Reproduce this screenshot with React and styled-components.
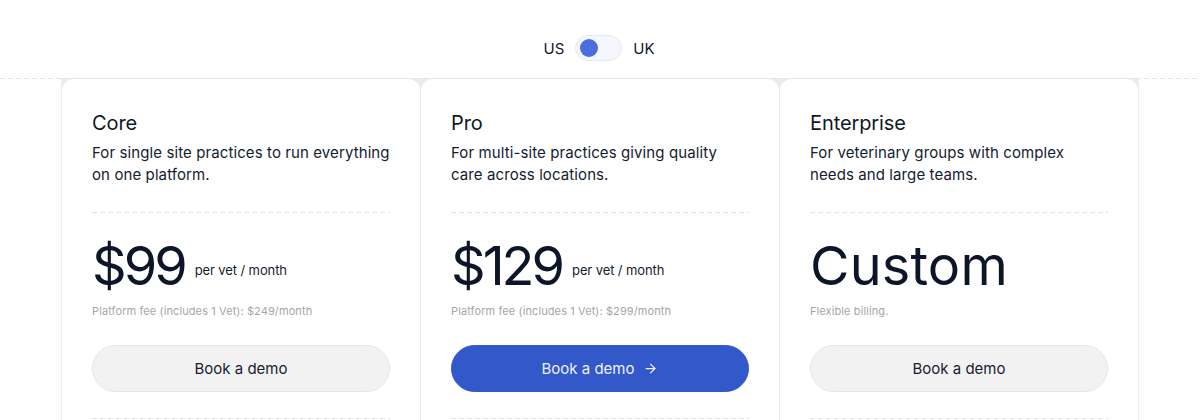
import React from "react";
import styled, { createGlobalStyle } from "styled-components";
import { ArrowRight } from "lucide-react";

const Global = createGlobalStyle`
  html, body { margin: 0; padding: 0; background: #fff; }
  body { font-family: Inter, "Noto Sans", sans-serif; color: #0f1629; -webkit-font-smoothing: antialiased; }
  * { box-sizing: border-box; }
`;

const Page = styled.div`
  width: 1200px;
  padding-top: 35px;
  overflow: hidden;
`;

const ToggleRow = styled.div`
  display: flex;
  justify-content: center;
  align-items: center;
  gap: 11px;
  height: 26px;
  margin-bottom: 17px;
  font-size: 15px;
  color: #111a2e;
  padding-right: 2px;
`;

const Track = styled.div`
  width: 47px;
  height: 26px;
  border-radius: 13px;
  background: #f6f7fc;
  border: 1px solid #e7e9f2;
  display: flex;
  align-items: center;
  padding: 0 4px;
`;

const Knob = styled.div`
  width: 18px;
  height: 18px;
  border-radius: 50%;
  background: #4a6edb;
`;

const Band = styled.div`
  display: flex;
  justify-content: center;
  background-image: linear-gradient(to right, #e4e4e4 60%, transparent 0);
  background-size: 8px 1px;
  background-repeat: repeat-x;
  background-position: 0 0;
`;

const Grid = styled.div`
  width: 1078px;
  display: grid;
  grid-template-columns: repeat(3, 358px);
  gap: 1px;
  padding: 0 1px;
  background: #ececec;
  border-top: 1px solid #e6e6e6;
  height: 343px;
`;

const Card = styled.div`
  background: #fff;
  border-radius: 12px 12px 0 0;
  padding: 30px 30px 0;
  display: flex;
  flex-direction: column;
`;

const Title = styled.div`
  font-size: 20px;
  line-height: 28px;
  letter-spacing: -0.1px;
  color: #101828;
`;

const Desc = styled.div`
  margin-top: 5px;
  font-size: 15px;
  line-height: 22px;
  color: #141c30;
  letter-spacing: 0.1px;
`;

const Divider = styled.div`
  height: 1px;
  margin: ${p => p.$top}px 0 26px;
  background-image: linear-gradient(to right, #e2e2e2 60%, transparent 0);
  background-size: 8px 1px;
  background-repeat: repeat-x;
`;

const PriceRow = styled.div`
  display: flex;
  align-items: center;
  gap: 10px;
  height: 53px;
`;

const Price = styled.div`
  font-size: 54px;
  line-height: 53px;
  letter-spacing: ${p => (p.$numeric ? "-3px" : "0.2px")};
  color: #0d1529;
`;

const Per = styled.div`
  font-size: 13px;
  padding-top: 8px;
  color: #141c30;
  letter-spacing: -0.1px;
`;

const Fee = styled.div`
  margin-top: 11px;
  font-size: 11px;
  line-height: 16px;
  color: #a6a6a6;
  letter-spacing: 0.1px;
`;

const Button = styled.button`
  margin-top: 26px;
  height: 47px;
  width: 100%;
  border-radius: 24px;
  font-family: inherit;
  font-size: 15px;
  letter-spacing: 0;
  display: flex;
  align-items: center;
  justify-content: center;
  gap: 9px;
  cursor: pointer;
  padding-bottom: 2px;
  border: 1px solid ${p => (p.$primary ? "#3358c9" : "#e6e6e6")};
  background: ${p => (p.$primary ? "#3358c9" : "#f2f2f2")};
  color: ${p => (p.$primary ? "#eef1ff" : "#161d30")};
`;

const plans = [
  {
    name: "Core",
    desc: ["For single site practices to run everything", "on one platform."],
    price: "$99",
    per: "per vet / month",
    fee: "Platform fee (includes 1 Vet): $249/month",
  },
  {
    name: "Pro",
    desc: ["For multi-site practices giving quality", "care across locations."],
    price: "$129",
    per: "per vet / month",
    fee: "Platform fee (includes 1 Vet): $299/month",
    primary: true,
  },
  {
    name: "Enterprise",
    desc: ["For veterinary groups with complex", "needs and large teams."],
    price: "Custom",
    fee: "Flexible billing.",
  },
];

export default function App() {
  return (
    <Page>
      <Global />
      <ToggleRow>
        <span>US</span>
        <Track>
          <Knob />
        </Track>
        <span>UK</span>
      </ToggleRow>
      <Band>
        <Grid>
          {plans.map(p => (
            <Card key={p.name}>
              <Title>{p.name}</Title>
              <Desc>
                {p.desc[0]}
                <br />
                {p.desc[1]}
              </Desc>
              <Divider $top={26} />
              <PriceRow>
                <Price $numeric={!!p.per}>{p.price}</Price>
                {p.per && <Per>{p.per}</Per>}
              </PriceRow>
              <Fee>{p.fee}</Fee>
              <Button $primary={p.primary}>
                Book a demo
                {p.primary && <ArrowRight size={15} strokeWidth={2} />}
              </Button>
              <Divider $top={26} />
            </Card>
          ))}
        </Grid>
      </Band>
    </Page>
  );
}
